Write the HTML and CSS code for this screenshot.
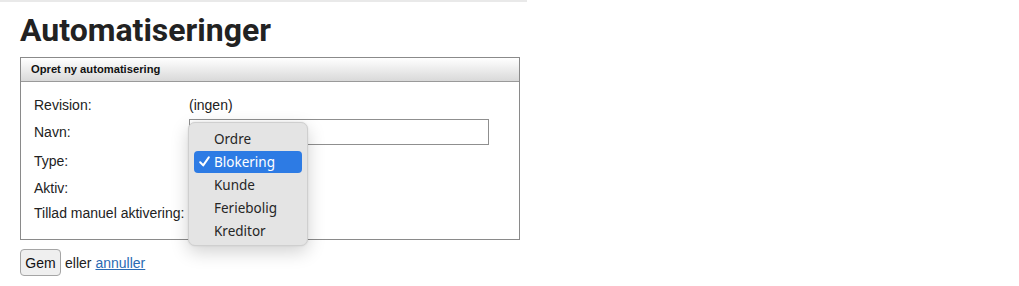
FILE: index.html
```html
<!DOCTYPE html>
<html lang="da">
<head>
<meta charset="utf-8">
<title>Automatiseringer</title>
<link rel="stylesheet" href="styles.css">
</head>
<body>
<div class="page">
  <h1 class="title">Automatiseringer</h1>
  <div class="panel">
    <div class="panel-head">Opret ny automatisering</div>
    <div class="panel-body">
      <div class="row r1"><span class="label">Revision:</span><span class="value">(ingen)</span></div>
      <div class="row r2"><span class="label">Navn:</span><span class="value"><input class="text-input" type="text"></span></div>
      <div class="row r3"><span class="label">Type:</span><span class="value"></span></div>
      <div class="row r4"><span class="label">Aktiv:</span><span class="value"></span></div>
      <div class="row r5"><span class="label">Tillad manuel aktivering:</span><span class="value"></span></div>
      <div class="menu">
        <div class="item">Ordre</div>
        <div class="item selected"><svg class="check" width="11" height="11" viewBox="0 0 11 11"><path d="M1.2 6.2 L4.2 9.4 L9.8 1.4" fill="none" stroke="#fff" stroke-width="2" stroke-linecap="round" stroke-linejoin="round"/></svg>Blokering</div>
        <div class="item">Kunde</div>
        <div class="item">Feriebolig</div>
        <div class="item">Kreditor</div>
      </div>
    </div>
  </div>
  <div class="actions">
    <button class="btn" type="button">Gem</button>
    <span class="or">eller</span>
    <a class="cancel" href="#">annuller</a>
  </div>
</div>
</body>
</html>
```
FILE: styles.css
```css
html, body {
  margin: 0;
  padding: 0;
  background: #fff;
}
body {
  font-family: "Liberation Sans", Arial, sans-serif;
  color: #222;
  font-size: 14px;
}
.page {
  width: 527px;
  border-top: 2px solid #e9e9e9;
  padding: 0 0 0 20px;
  box-sizing: border-box;
}
.title {
  font-family: Roboto, "Liberation Sans", sans-serif;
  font-weight: 700;
  font-size: 32px;
  line-height: 38px;
  margin: 9px 0 8px 0;
  color: #222;
}
.panel {
  width: 500px;
  border: 1px solid #8a8a8a;
  box-sizing: border-box;
}
.panel-head {
  height: 23px;
  line-height: 23px;
  padding-left: 10px;
  font-size: 11.2px;
  font-weight: 700;
  color: #111;
  background: linear-gradient(#ffffff, #d9d9d9);
  border-bottom: 1px solid #9a9a9a;
}
.panel-body {
  position: relative;
  padding: 10px 13px 13px 13px;
}
.row {
  display: grid;
  grid-template-columns: 155px 1fr;
  align-items: center;
}
.r1 { height: 26px; }
.r2 { height: 28px; }
.r3 { height: 29px; }
.r4 { height: 25px; }
.r5 { height: 26px; }
.text-input {
  display: block;
  width: 300px;
  height: 26px;
  box-sizing: border-box;
  border: 1px solid #8f8f8f;
  margin: 0;
  padding: 0 4px;
  font: inherit;
  background: #fff;
}
.menu {
  position: absolute;
  left: 167px;
  top: 40px;
  width: 120px;
  height: 124px;
  box-sizing: border-box;
  padding: 5px 5px 0 5px;
  background: #e4e4e4;
  border: 1px solid #cfcfcf;
  border-radius: 7px;
  box-shadow: 0 6px 18px rgba(0,0,0,0.18), 0 0 2px rgba(0,0,0,0.1);
  font-family: "Noto Sans", "Liberation Sans", sans-serif;
  font-size: 13.5px;
  color: #262626;
}
.item {
  height: 23px;
  line-height: 23px;
  padding-left: 20px;
  border-radius: 4px;
  position: relative;
}
.item.selected {
  background: #2d7be4;
  color: #fff;
  height: 22px;
  line-height: 22px;
  margin-bottom: 1px;
}
.check {
  position: absolute;
  left: 5px;
  top: 5px;
}
.actions {
  display: flex;
  align-items: center;
  margin-top: 9px;
  gap: 4px;
}
.btn {
  height: 27px;
  width: 41px;
  padding: 0;
  font-family: "Liberation Sans", Arial, sans-serif;
  font-size: 14px;
  color: #111;
  background: #efefef;
  border: 1px solid #a5a5a5;
  border-radius: 4px;
}
.or {
  color: #222;
}
.cancel {
  color: #2a6bb3;
  text-decoration: underline;
}
```
